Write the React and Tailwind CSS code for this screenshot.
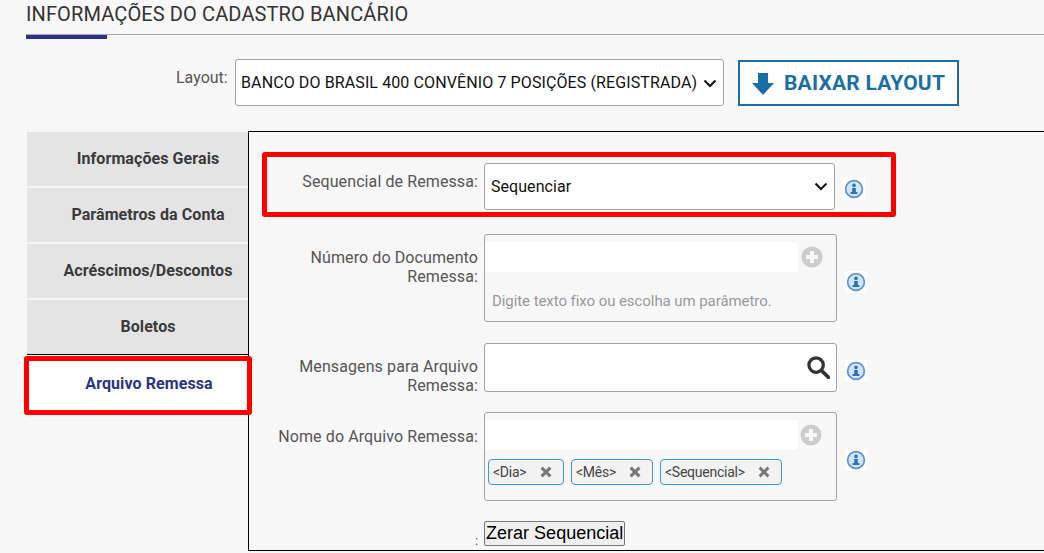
import React from "react";

const Info = () => (
  <span className="flex h-[22px] w-[22px] shrink-0 items-center justify-center bg-white">
    <svg width="20" height="20" viewBox="0 0 20 20">
      <circle cx="10" cy="10" r="8.4" fill="#cfe6f7" stroke="#5b8fd6" strokeWidth="1.7" />
      <circle cx="10" cy="6.4" r="1.8" fill="#2f6fb5" />
      <path d="M8.2 9h3.6v4h1.6v2H6.6v-2h1.6z" fill="#2f6fb5" />
    </svg>
  </span>
);

const Plus = () => (
  <svg width="22" height="22" viewBox="0 0 22 22" className="shrink-0">
    <circle cx="11" cy="11" r="10.5" fill="#cccccc" />
    <path d="M9 5h4v4h4v4h-4v4H9v-4H5V9h4z" fill="#f7f7f7" />
  </svg>
);

const X = () => (
  <svg width="12" height="12" viewBox="0 0 12 12">
    <path d="M1.6 1.6l8.8 8.8M10.4 1.6l-8.8 8.8" stroke="#777777" strokeWidth="3" />
  </svg>
);

const Chevron = () => (
  <svg width="14" height="9" viewBox="0 0 14 9" className="shrink-0">
    <path d="M1.5 1.5L7 7l5.5-5.5" fill="none" stroke="#111111" strokeWidth="2" />
  </svg>
);

const Chip = ({ label, w }) => (
  <span className={`flex h-[26px] items-center justify-between rounded-[4px] border border-[#3d94d6] bg-[#f2f2f2] pl-[4px] pr-[11px] text-[14px] tracking-[-0.25px] leading-none text-[#444] ${w}`}>
    {label}
    <X />
  </span>
);

const Tab = ({ children }) => (
  <div className="flex h-[54px] items-center justify-center bg-[#e4e4e4] pl-[21px] text-[16px] font-bold tracking-[0.08px] text-[#3a3a3a]">
    {children}
  </div>
);

const Label = ({ children, h }) => (
  <div className={`w-[229px] shrink-0 text-right text-[16px] leading-[19px] tracking-[0.1px] text-[#555] ${h}`}>{children}</div>
);

export default function App() {
  return (
    <div className="flex h-[553px] w-[1044px] flex-col overflow-hidden bg-[#f7f7f7] font-['Roboto',sans-serif]">
      <h1 className="ml-[26px] mt-[2px] h-[32px] text-[20px] font-normal leading-[24px] tracking-[0.12px] text-[#333]">
        INFORMAÇÕES DO CADASTRO BANCÁRIO
      </h1>
      <div className="ml-[26px] h-[4px] border-t border-[#aaaaaa]">
        <div className="h-[4px] w-[81px] bg-[#2b3388]" />
      </div>

      <div className="mt-[21px] flex h-[47px] items-start pl-[176px]">
        <span className="mt-[9px] w-[59px] text-[16px] leading-[20px] text-[#555]">Layout:</span>
        <div className="flex h-[47px] w-[489px] items-center justify-between rounded-[3px] border border-[#a3a3a3] bg-white pl-[5px] pr-[6px] pt-[1px] text-[16px] tracking-[0.11px] text-[#111]">
          BANCO DO BRASIL 400 CONVÊNIO 7 POSIÇÕES (REGISTRADA)
          <Chevron />
        </div>
        <button className="ml-[14px] mt-[1px] flex h-[46px] w-[221px] items-center whitespace-nowrap border-2 border-[#1a6ea8] bg-white pl-[11px] pt-[1px] text-[21px] font-bold tracking-[0.22px] text-[#1a6ea8]">
          <svg width="24" height="24" viewBox="0 0 24 24" className="mr-[9px]">
            <path d="M7 1h10v10h6L12 23 1 11h6z" fill="#1a6ea8" />
          </svg>
          BAIXAR LAYOUT
        </button>
      </div>

      <div className="mt-[25px] flex">
        <div className="ml-[27px] flex w-[221px] shrink-0 flex-col pt-[1px]">
          <div className="flex flex-col gap-[2px]">
            <Tab>Informações Gerais</Tab>
            <Tab>Parâmetros da Conta</Tab>
            <Tab>Acréscimos/Descontos</Tab>
            <Tab>Boletos</Tab>
          </div>
          <div className="h-[1px] bg-black" />
          <div className="flex h-[56px] items-center justify-center bg-white pl-[23px] pt-[2px] text-[16px] font-bold tracking-[0.08px] text-[#2b3388]">
            Arquivo Remessa
          </div>
        </div>

        <div className="h-[420px] flex-1 border-y border-l border-black">
          <div className="flex flex-col pt-[31px]">
            <div className="flex items-start">
              <Label h="pt-[9px]">Sequencial de Remessa:</Label>
              <div className="ml-[6px] flex h-[47px] w-[351px] items-center justify-between rounded-[3px] border border-[#a3a3a3] bg-white pl-[6px] pr-[6px] text-[16px] tracking-[0.05px] text-[#111]">
                Sequenciar
                <Chevron />
              </div>
              <span className="ml-[8px] mt-[15px]"><Info /></span>
            </div>

            <div className="mt-[24px] flex items-start">
              <Label h="pt-[14px]">Número do Documento Remessa:</Label>
              <div className="ml-[6px] h-[88px] w-[353px] rounded-[3px] border border-[#a3a3a3] pt-[7px]">
                <div className="flex items-center">
                  <div className="h-[30px] w-[313px] rounded-[2px] bg-white" />
                  <span className="ml-[3px]"><Plus /></span>
                </div>
                <p className="ml-[7px] mt-[19px] text-[15px] leading-[20px] tracking-[-0.07px] text-[#999]">Digite texto fixo ou escolha um parâmetro.</p>
              </div>
              <span className="ml-[8px] mt-[37px]"><Info /></span>
            </div>

            <div className="mt-[21px] flex items-start">
              <Label h="pt-[14px]">Mensagens para Arquivo Remessa:</Label>
              <div className="ml-[6px] flex h-[49px] w-[353px] items-center justify-end rounded-[3px] border border-[#a3a3a3] bg-white pr-[6px]">
                <svg width="23" height="23" viewBox="0 0 24 24">
                  <circle cx="9.5" cy="9.5" r="7.5" fill="none" stroke="#333333" strokeWidth="3.4" />
                  <path d="M15 15l7.5 7.5" stroke="#333333" strokeWidth="3.8" strokeLinecap="round" />
                </svg>
              </div>
              <span className="ml-[8px] mt-[17px]"><Info /></span>
            </div>

            <div className="mt-[17px] flex items-start">
              <Label h="pt-[15px]">Nome do Arquivo Remessa:</Label>
              <div className="ml-[6px] h-[89px] w-[353px] rounded-[3px] border border-[#a3a3a3] pt-[7px]">
                <div className="flex items-center">
                  <div className="h-[30px] w-[313px] rounded-[2px] bg-white" />
                  <span className="ml-[2px]"><Plus /></span>
                </div>
                <div className="ml-[3px] mt-[9px] flex gap-[7px]">
                  <Chip label="<Dia>" w="w-[76px]" />
                  <Chip label="<Mês>" w="w-[82px]" />
                  <Chip label="<Sequencial>" w="w-[122px]" />
                </div>
              </div>
              <span className="ml-[8px] mt-[37px]"><Info /></span>
            </div>

            <div className="mt-[20px] flex items-end">
              <span className="ml-[226px] mr-[6px] text-[13px] leading-[10px] text-[#2b5ea8]">:</span>
              <button className="flex h-[25px] w-[141px] items-center justify-center whitespace-nowrap rounded-[2px] border border-[#767676] bg-[#efefef] p-0 pb-[2px] font-['Liberation_Sans',sans-serif] text-[18px] leading-none text-black">
                Zerar Sequencial
              </button>
            </div>
          </div>
        </div>
      </div>

      <div className="pointer-events-none absolute left-[262px] top-[152px] h-[65px] w-[634px] rounded-[3px] border-[5px] border-[#ff0000]" />
      <div className="pointer-events-none absolute left-[24px] top-[356px] h-[59px] w-[228px] rounded-[3px] border-[5px] border-[#ff0000]" />
    </div>
  );
}
